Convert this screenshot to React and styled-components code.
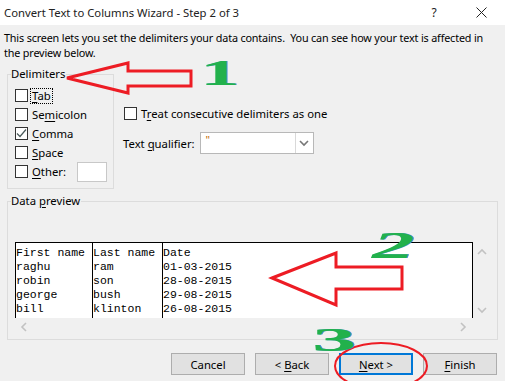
import React from "react";
import styled, { createGlobalStyle } from "styled-components";

const Global = createGlobalStyle`
  html, body { margin: 0; padding: 0; background: #f0f0f0; }
  body { font-family: "Noto Sans", "Open Sans", sans-serif; font-size: 11.3px; color: #000; }
  * { box-sizing: border-box; }
`;

const Dialog = styled.div`
  position: relative;
  width: 505px;
  height: 381px;
  overflow: hidden;
  background: #f0f0f0;
  display: flex;
  flex-direction: column;
`;

const TitleBar = styled.div`
  height: 25px;
  background: #fff;
  display: flex;
  align-items: center;
  padding-left: 4px;
  font-size: 11.3px;
  color: #222;
`;

const TitleText = styled.div`
  flex: 1;
`;

const TitleBtn = styled.div`
  width: ${(p) => p.$w}px;
  display: flex;
  justify-content: center;
  align-items: center;
  color: #222;
  font-size: 12px;
`;

const Description = styled.p`
  margin: 5px 0 0 4px;
  line-height: 15px;
  height: 30px;
  font-size: 10.8px;
  letter-spacing: -0.16px;
  white-space: nowrap;
`;

const Body = styled.div`
  padding: 0 7px;
  display: flex;
  flex-direction: column;
`;

const TopRow = styled.div`
  display: flex;
  margin-top: 7px;
`;

const Group = styled.fieldset`
  margin: 0;
  padding: 0;
  border: 1px solid #dcdcdc;
  width: ${(p) => p.$w}px;
  height: ${(p) => p.$h}px;
  min-width: 0;
`;

const Legend = styled.legend`
  padding: 0 1px 0 0;
  margin-left: 3px;
  line-height: 14px;
`;

const Checks = styled.div`
  display: flex;
  flex-direction: column;
  padding: 5px 0 0 7px;
`;

const CheckRow = styled.div`
  display: flex;
  align-items: center;
  height: 19px;
  gap: 4px;
`;

const Box = styled.div`
  width: 13px;
  height: 13px;
  border: 1px solid #333;
  background: #fff;
  flex: none;
  display: flex;
  align-items: center;
  justify-content: center;
`;

const Label = styled.span`
  color: #000;
  padding: 0 1px;
  border: 1px dotted ${(p) => (p.$focus ? "#000" : "transparent")};
  line-height: 14px;
  margin-left: -2px;
`;

const U = styled.span`
  text-decoration: underline;
  text-underline-offset: 2px;
`;

const OtherInput = styled.div`
  width: 30px;
  height: 20px;
  background: #fff;
  border: 1px solid #c8c8c8;
  margin-left: 5px;
`;

const Options = styled.div`
  display: flex;
  flex-direction: column;
  padding: 37px 0 0 10px;
`;

const QualRow = styled.div`
  display: flex;
  align-items: center;
  margin-top: 9px;
  margin-left: -1px;
  gap: 5px;
`;

const Select = styled.div`
  width: 114px;
  height: 22px;
  background: #fff;
  border: 1px solid #b8b8b8;
  display: flex;
`;

const SelectValue = styled.div`
  flex: 1;
  padding: 1px 0 0 5px;
  color: #c26a00;
  font-size: 11px;
  line-height: 12px;
`;

const SelectBtn = styled.div`
  width: 18px;
  border-left: 1px solid #d9d9d9;
  display: flex;
  align-items: center;
  justify-content: center;
`;

const PreviewGroup = styled(Group)`
  margin-top: 5px;
`;

const PreviewGrid = styled.div`
  display: grid;
  grid-template-columns: 458px 17px;
  grid-template-rows: 76px 17px;
  margin: 34px 0 0 7px;
`;

const Table = styled.div`
  background: #fff;
  border: 1px solid #000;
  border-bottom: none;
  display: flex;
  font-family: "Liberation Mono", "Courier New", monospace;
  font-size: 11.5px;
  line-height: 14px;
  overflow: hidden;
`;

const Column = styled.div`
  width: ${(p) => (p.$w ? `${p.$w}px` : "auto")};
  flex: ${(p) => (p.$w ? "none" : 1)};
  border-right: ${(p) => (p.$w ? "1px solid #000" : "none")};
  padding-top: 3px;
  white-space: pre;
`;

const VScroll = styled.div`
  display: flex;
  flex-direction: column;
  justify-content: space-between;
  align-items: center;
  padding: 6px 0 4px;
`;

const HScroll = styled.div`
  display: flex;
  justify-content: space-between;
  align-items: center;
  padding: 0 6px 0 5px;
`;

const ButtonRow = styled.div`
  display: flex;
  justify-content: flex-end;
  gap: 10px;
  padding-right: 1px;
  margin-top: 13px;
`;

const Button = styled.div`
  width: 74px;
  height: 22px;
  background: #e1e1e1;
  border: ${(p) => (p.$primary ? "2px solid #0078d7" : "1px solid #adadad")};
  display: flex;
  align-items: center;
  justify-content: center;
  color: #000;
`;

const Overlay = styled.svg`
  position: absolute;
  left: 0;
  top: 0;
  pointer-events: none;
`;

const Numeral = styled.div`
  position: absolute;
  left: ${(p) => p.$x}px;
  top: ${(p) => p.$y}px;
  color: #22b14c;
  font-family: "Liberation Serif", serif;
  font-weight: bold;
  font-style: ${(p) => (p.$italic ? "italic" : "normal")};
  font-size: ${(p) => p.$size}px;
  line-height: 0.72;
  transform: scaleX(${(p) => p.$sx});
  transform-origin: left top;
  text-shadow: 0.5px 0 #3a8fd0;
`;

const Check = () => (
  <svg width="11" height="11" viewBox="0 0 11 11">
    <polyline points="1,5.5 4,8.5 10,1.5" fill="none" stroke="#4a5a5a" strokeWidth="1.2" />
  </svg>
);

const Chevron = ({ dir, color = "#c2c2c2" }) => {
  const pts = {
    up: "1,6 5,2 9,6",
    down: "1,2 5,6 9,2",
    left: "6,1 2,5 6,9",
    right: "2,1 6,5 2,9",
  }[dir];
  const horiz = dir === "left" || dir === "right";
  return (
    <svg width={horiz ? 8 : 10} height={horiz ? 10 : 8} viewBox={horiz ? "0 0 8 10" : "0 0 10 8"}>
      <polyline points={pts} fill="none" stroke={color} strokeWidth="1.6" />
    </svg>
  );
};

const Checkbox = ({ checked, children, focus }) => (
  <CheckRow>
    <Box>{checked && <Check />}</Box>
    <Label $focus={focus}>{children}</Label>
  </CheckRow>
);

const rows = [
  ["First name", "Last name", "Date"],
  ["raghu", "ram", "01-03-2015"],
  ["robin", "son", "28-08-2015"],
  ["george", "bush", "29-08-2015"],
  ["bill", "klinton", "26-08-2015"],
];

export default function App() {
  return (
    <Dialog>
      <Global />
      <TitleBar>
        <TitleText>Convert Text to Columns Wizard - Step 2 of 3</TitleText>
        <TitleBtn $w={46}>?</TitleBtn>
        <TitleBtn $w={48}>
          <svg width="11" height="11" viewBox="0 0 11 11">
            <path d="M0.5 0.5 L10.5 10.5 M10.5 0.5 L0.5 10.5" stroke="#222" strokeWidth="1" />
          </svg>
        </TitleBtn>
      </TitleBar>
      <Description>
        This screen lets you set the delimiters your data contains.&nbsp; You can see how your text is affected in
        <br />
        the preview below.
      </Description>
      <Body>
        <TopRow>
          <Group $w={107} $h={122}>
            <Legend>Delimiters</Legend>
            <Checks>
              <Checkbox focus>
                <U>T</U>ab
              </Checkbox>
              <Checkbox>
                Se<U>m</U>icolon
              </Checkbox>
              <Checkbox checked>
                <U>C</U>omma
              </Checkbox>
              <Checkbox>
                <U>S</U>pace
              </Checkbox>
              <CheckRow>
                <Box />
                <Label>
                  <U>O</U>ther:
                </Label>
                <OtherInput />
              </CheckRow>
            </Checks>
          </Group>
          <Options>
            <Checkbox>
              T<U>r</U>eat consecutive delimiters as one
            </Checkbox>
            <QualRow>
              <span>
                Text <U>q</U>ualifier:
              </span>
              <Select>
                <SelectValue>"</SelectValue>
                <SelectBtn>
                  <Chevron dir="down" color="#777" />
                </SelectBtn>
              </Select>
            </QualRow>
          </Options>
        </TopRow>
        <PreviewGroup $w={491} $h={146}>
          <Legend>
            Data <U>p</U>review
          </Legend>
          <PreviewGrid>
            <Table>
              {[77, 70, 0].map((w, ci) => (
                <Column key={ci} $w={w || undefined}>
                  {rows.map((r) => r[ci]).join("\n")}
                </Column>
              ))}
            </Table>
            <VScroll>
              <Chevron dir="up" />
              <Chevron dir="down" />
            </VScroll>
            <HScroll>
              <Chevron dir="left" />
              <Chevron dir="right" />
            </HScroll>
          </PreviewGrid>
        </PreviewGroup>
        <ButtonRow>
          <Button>
            <span>Cancel</span>
          </Button>
          <Button>
            <span>
              &lt; <U>B</U>ack
            </span>
          </Button>
          <Button $primary>
            <span>
              <U>N</U>ext &gt;
            </span>
          </Button>
          <Button>
            <span>
              <U>F</U>inish
            </span>
          </Button>
        </ButtonRow>
      </Body>

      <Overlay width="505" height="381" viewBox="0 0 505 381">
        <polygon
          points="67,78 128,63 128,71 191,71 191,86 128,86 128,93"
          fill="none"
          stroke="#ed1c24"
          strokeWidth="3"
        />
        <polygon
          points="272,278 336,253 336,267 402,267 402,289 336,289 336,305"
          fill="none"
          stroke="#ed1c24"
          strokeWidth="3"
        />
        <ellipse cx="381" cy="366" rx="46" ry="23" fill="none" stroke="#ed1c24" strokeWidth="2" />
      </Overlay>
      <Numeral $x={200} $y={61} $size={36} $sx={2.2}>1</Numeral>
      <Numeral $x={372} $y={233} $size={37} $sx={2.3} $italic>2</Numeral>
      <Numeral $x={312} $y={328} $size={34} $sx={2.6}>3</Numeral>
    </Dialog>
  );
}
